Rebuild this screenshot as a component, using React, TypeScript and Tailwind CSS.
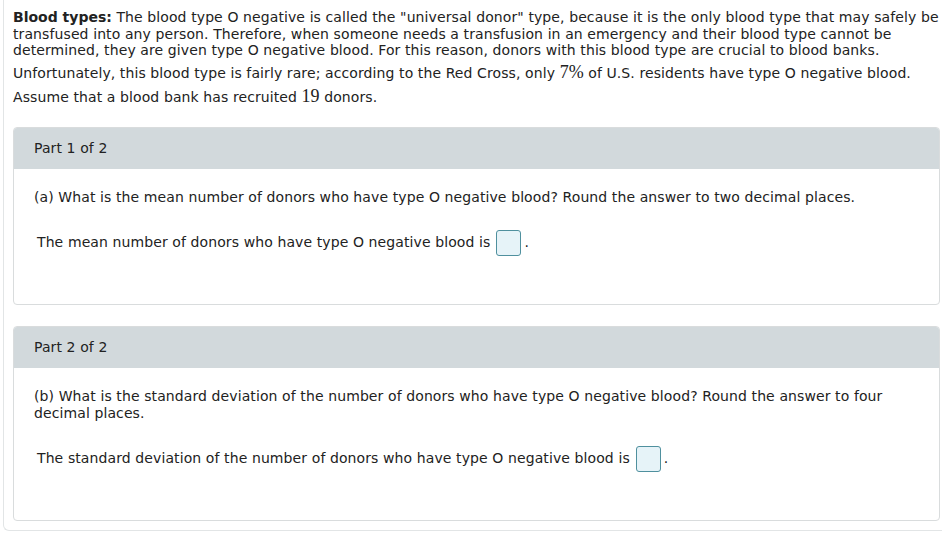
import React from 'react';

const AnswerBox: React.FC = () => (
  <span className="inline-block align-middle w-[25px] h-[26px] ml-[6px] mr-[3px] bg-[#e6f3f8] border border-[#4f909e] rounded-[3px]"></span>
);

const PartCard: React.FC<{ title: string; question: React.ReactNode; answer: string }> = ({ title, question, answer }) => (
  <div className="border border-[#d9dcdd] rounded-[4px] overflow-hidden bg-white">
    <div className="h-[41px] bg-[#d2d9dc] flex items-center pl-5">{title}</div>
    <div className="pl-5 pr-5 pt-[20px] pb-[48px]">
      <p className="leading-[17px]">{question}</p>
      <div className="mt-[24px] pl-[3px] flex items-center h-[26px]">
        <span>{answer}</span>
        <AnswerBox />
        <span>.</span>
      </div>
    </div>
  </div>
);

export default function App() {
  return (
    <div className="w-[942px] h-[533px] overflow-hidden bg-white text-[14px] tracking-[0.1px] text-[#222] font-['DejaVu_Sans',sans-serif]">
      <div className="ml-[3px] w-[960px] h-[531px] border-l border-b border-[#e2e5e6] rounded-bl-md pl-[9px] pr-[23px]">
        <p className="leading-[16.5px] pt-[9px]">
          <b className="tracking-normal">Blood types:</b> The blood type O negative is called the "universal donor" type, because it is the only blood type that may safely be transfused into any person. Therefore, when someone needs a transfusion in an emergency and their blood type cannot be determined, they are given type O negative blood. For this reason, donors with this blood type are crucial to blood banks.
        </p>
        <p className="mt-[3px] leading-[20px]">
          Unfortunately, this blood type is fairly rare; according to the Red Cross, only{' '}
          <span className="font-['Liberation_Serif',serif] text-[18px] tracking-normal">7%</span> of U.S. residents have type O negative blood.
        </p>
        <p className="mt-[3px] leading-[20px]">
          Assume that a blood bank has recruited <span className="font-['Liberation_Serif',serif] text-[18px] tracking-normal">19</span> donors.
        </p>

        <div className="mt-[20px] flex flex-col gap-[21px]">
          <PartCard
            title="Part 1 of 2"
            question="(a) What is the mean number of donors who have type O negative blood? Round the answer to two decimal places."
            answer="The mean number of donors who have type O negative blood is"
          />
          <PartCard
            title="Part 2 of 2"
            question="(b) What is the standard deviation of the number of donors who have type O negative blood? Round the answer to four decimal places."
            answer="The standard deviation of the number of donors who have type O negative blood is"
          />
        </div>
      </div>
    </div>
  );
}
